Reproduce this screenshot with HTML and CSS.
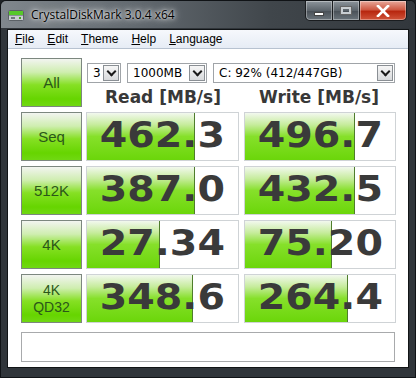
FILE: index.html
```html
<!DOCTYPE html>
<html lang="en">
<head>
  <meta charset="UTF-8" />
  <meta name="viewport" content="width=device-width, initial-scale=1.0"/>
  <title>CrystalDiskMark 3.0.4 x64</title>
  <link rel="stylesheet" href="styles.css">
</head>
<body>
  <div class="window">

    <!-- Title bar -->
    <div class="titlebar">
      <svg class="app-icon" width="16" height="16" viewBox="0 0 16 16">
        <rect x="0.5" y="3.5" width="15" height="10" rx="1" fill="#c9cdd0" stroke="#5b6166"/>
        <rect x="1" y="4" width="14" height="4" fill="#56c82a"/>
        <rect x="1" y="8" width="14" height="1" fill="#8a9196"/>
        <rect x="3" y="10" width="4" height="2" fill="#70777c"/>
        <rect x="11" y="10" width="2" height="2" fill="#3fa81a"/>
      </svg>
      <span class="title">CrystalDiskMark 3.0.4 x64</span>
      <div class="caption">
        <span class="cap min"><i></i></span>
        <span class="cap max"><i></i></span>
        <span class="cap close">
          <svg width="14" height="12" viewBox="0 0 14 12">
            <path d="M2 1 L12 11 M12 1 L2 11" stroke="#fff" stroke-width="2.6" stroke-linecap="square"/>
          </svg>
        </span>
      </div>
    </div>

    <!-- Client area -->
    <div class="client">
      <div class="menubar">
        <span><u>F</u>ile</span>
        <span><u>E</u>dit</span>
        <span><u>T</u>heme</span>
        <span><u>H</u>elp</span>
        <span><u>L</u>anguage</span>
      </div>

      <div class="panel">
        <div class="grid">
          <div class="btn">All</div>
          <div class="top">
            <div class="selects">
              <div class="combo c-count"><span>3</span><b class="arrow"></b></div>
              <div class="combo c-size"><span>1000MB</span><b class="arrow"></b></div>
              <div class="combo c-drive"><span>C: 92% (412/447GB)</span><b class="arrow"></b></div>
            </div>
            <div class="heads">
              <span>Read [MB/s]</span>
              <span>Write [MB/s]</span>
            </div>
          </div>

          <div class="btn">Seq</div>
          <div class="val"><div class="bar" style="width:108px"></div><span>462.3</span></div>
          <div class="val"><div class="bar" style="width:110px"></div><span>496.7</span></div>

          <div class="btn">512K</div>
          <div class="val"><div class="bar" style="width:108px"></div><span>387.0</span></div>
          <div class="val"><div class="bar" style="width:110px"></div><span>432.5</span></div>

          <div class="btn">4K</div>
          <div class="val"><div class="bar" style="width:73px"></div><span>27.34</span></div>
          <div class="val"><div class="bar" style="width:87px"></div><span>75.20</span></div>

          <div class="btn two">4K<br>QD32</div>
          <div class="val"><div class="bar" style="width:106px"></div><span>348.6</span></div>
          <div class="val"><div class="bar" style="width:103px"></div><span>264.4</span></div>
        </div>

        <div class="comment"></div>
      </div>
    </div>

  </div>
</body>
</html>
```

FILE: styles.css
```css
* {
  box-sizing: border-box;
}
body {
  margin: 0;
  background: #1e2226;
  font-family: "Liberation Sans", Arial, sans-serif;
}
.window {
  width: 416px;
  height: 378px;
  border: 1px solid #101316;
  border-radius: 6px 6px 0 0;
  background: #30353a;
  padding: 0 6px 9px;
  display: flex;
  flex-direction: column;
  overflow: hidden;
}

/* title bar */
.titlebar {
  height: 28px;
  margin: 0 -6px;
  padding-left: 7px;
  display: flex;
  align-items: center;
  background: linear-gradient(to right, #80878d 0%, #60676d 35%, #40464b 65%, #32373c 100%);
}
.app-icon {
  margin-top: 1px;
}
.title {
  margin-left: 7px;
  font-family: "Open Sans", "Liberation Sans", sans-serif;
  font-size: 12px;
  color: #000;
  text-shadow: 0 0 8px #fff, 0 0 5px rgba(255,255,255,0.8), 0 0 2px rgba(255,255,255,0.6);
}
.caption {
  margin-left: auto;
  margin-right: 8px;
  align-self: flex-start;
  display: flex;
  height: 20px;
}
.cap {
  height: 20px;
  display: flex;
  align-items: center;
  justify-content: center;
  border: 1px solid #1a1d20;
  border-top: none;
  box-shadow: inset 0 0 0 1px rgba(255,255,255,0.35);
}
.cap.min {
  width: 28px;
  border-radius: 0 0 0 5px;
  background: linear-gradient(#8d959c, #5c646b 50%, #484f56 51%, #6b747b);
}
.cap.max {
  width: 27px;
  border-left: none;
  background: linear-gradient(#8d959c, #5c646b 50%, #484f56 51%, #6b747b);
}
.cap.close {
  width: 47px;
  border-left: none;
  border-radius: 0 0 5px 0;
  background: linear-gradient(#e8a89a, #cf5a44 45%, #b8270f 55%, #d0543a);
}
.cap.min i {
  width: 10px;
  height: 4px;
  margin-top: 6px;
  background: #fff;
  border: 1px solid #444;
}
.cap.max i {
  width: 12px;
  height: 9px;
  border: 1px solid #666;
  box-shadow: inset 0 0 0 2px #c9ced2;
}

/* client */
.client {
  flex: 1;
  margin-top: 1px;
  border: 1px solid #111416;
  background: #fff;
  display: flex;
  flex-direction: column;
}
.menubar {
  height: 19px;
  display: flex;
  align-items: center;
  gap: 13px;
  padding-left: 7px;
  font-size: 12px;
  color: #000;
  background: linear-gradient(#f6f8fc, #e6ecf5);
  border-bottom: 1px solid #b7c2d0;
}
.menubar u {
  text-decoration-thickness: 1px;
}

.panel {
  flex: 1;
  padding: 9px 13px 5px;
}
.grid {
  display: grid;
  grid-template-columns: 61px 152px 152px;
  grid-auto-rows: 49px;
  column-gap: 5px;
  row-gap: 5px;
}
.grid > .val:nth-child(3n+1) {
  margin-left: -1px;
}

.btn {
  border: 1px solid #7c877f;
  background: linear-gradient(#f2f4f0 0%, #cfeeb0 28%, #86e024 55%, #66d500 85%, #70d812 100%);
  display: flex;
  align-items: center;
  justify-content: center;
  text-align: center;
  font-size: 15px;
  color: #2b5719;
}
.btn.two {
  font-size: 14px;
  line-height: 17px;
}

.top {
  grid-column: 2 / 4;
  display: flex;
  flex-direction: column;
}
.selects {
  margin-top: 5px;
  display: flex;
  gap: 6px;
}
.combo {
  height: 20px;
  border: 1px solid #a0a4a8;
  background: #fff;
  display: flex;
  align-items: center;
  justify-content: space-between;
  padding: 1px 1px 1px 5px;
  font-family: "DejaVu Sans", sans-serif;
  font-size: 12px;
  color: #000;
}
.c-count { width: 34px; }
.c-size { width: 80px; }
.c-drive { width: 182px; }
.arrow {
  width: 16px;
  height: 16px;
  border: 1px solid #8a8f94;
  background: linear-gradient(#f6f6f6, #d8dadc);
  position: relative;
}
.arrow::after {
  content: "";
  position: absolute;
  left: 4px;
  top: 2px;
  width: 5px;
  height: 5px;
  border-right: 2px solid #1a1a1a;
  border-bottom: 2px solid #1a1a1a;
  transform: rotate(45deg);
}
.heads {
  flex: 1;
  display: grid;
  grid-template-columns: 152px 152px;
  column-gap: 4px;
  align-items: center;
  padding-top: 3px;
  text-align: center;
  font-family: "DejaVu Sans", sans-serif;
  font-weight: bold;
  font-size: 17px;
  color: #383838;
}

.val {
  position: relative;
  border: 1px solid #cfd3d6;
  background: #fff;
  display: flex;
  align-items: center;
  justify-content: center;
  overflow: hidden;
}
.bar {
  position: absolute;
  left: 0;
  top: 0;
  bottom: 0;
  background: linear-gradient(#f2f8ee 0%, #c6ec9c 25%, #86e02a 50%, #6bd60a 100%);
  border-right: 1px solid #4f7d2c;
}
.val span {
  position: relative;
  margin-top: -3px;
  font-family: "DejaVu Sans", sans-serif;
  font-weight: bold;
  font-size: 35px;
  transform: scaleX(1.13);
  color: #3a3a3a;
}

.comment {
  margin-top: 9px;
  height: 30px;
  border: 1px solid #a8aaac;
  background: #fff;
}
```
